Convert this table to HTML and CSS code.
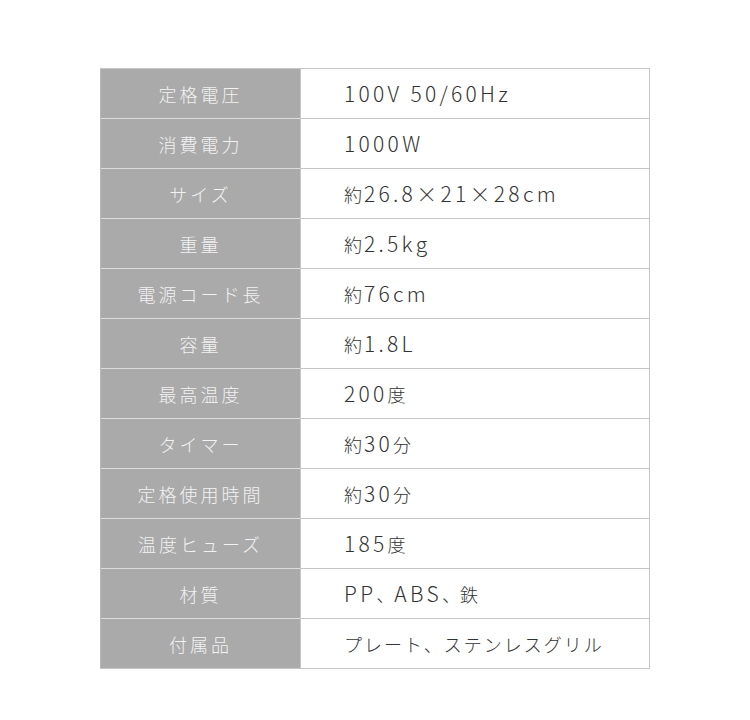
FILE: index.html
```html
<!DOCTYPE html>
<html lang="ja">
<head>
<meta charset="utf-8">
<link rel="stylesheet" href="styles.css">
</head>
<body>
<table class="spec">
  <tr><th>定格電圧</th><td><span class="n">100V 50/60Hz</span></td></tr>
  <tr><th>消費電力</th><td><span class="n">1000W</span></td></tr>
  <tr><th>サイズ</th><td>約<span class="n">26.8×21×28cm</span></td></tr>
  <tr><th>重量</th><td>約<span class="n">2.5kg</span></td></tr>
  <tr><th>電源コード長</th><td>約<span class="n">76cm</span></td></tr>
  <tr><th>容量</th><td>約<span class="n">1.8L</span></td></tr>
  <tr><th>最高温度</th><td><span class="n">200</span>度</td></tr>
  <tr><th>タイマー</th><td>約<span class="n">30</span>分</td></tr>
  <tr><th>定格使用時間</th><td>約<span class="n">30</span>分</td></tr>
  <tr><th>温度ヒューズ</th><td><span class="n">185</span>度</td></tr>
  <tr><th>材質</th><td><span class="n">PP</span><span class="p">、</span><span class="n">ABS</span><span class="p">、</span>鉄</td></tr>
  <tr><th>付属品</th><td>プレート、ステンレスグリル</td></tr>
</table>
</body>
</html>
```
FILE: styles.css
```css
html, body {
  margin: 0;
  padding: 0;
  background: #ffffff;
}
body {
  font-family: "Noto Sans CJK JP", "Noto Sans", sans-serif;
  font-weight: 300;
}
.spec {
  margin: 68px 0 0 100px;
  width: 550px;
  border-collapse: collapse;
  table-layout: fixed;
}
.spec th, .spec td {
  height: 50px;
  padding: 0;
  font-size: 18px;
  line-height: 1;
  box-sizing: border-box;
}
.spec th {
  width: 200px;
  background: #aaaaaa;
  color: #f2f2f2;
  font-weight: 300;
  text-align: center;
  letter-spacing: 3px;
  border-top: 1px solid #dcdcdc;
  border-left: 1px solid #b9b9b9;
}
.spec td {
  color: #333333;
  text-align: left;
  padding-left: 43px;
  letter-spacing: 2px;
  border: 1px solid #c6c6c6;
}
.spec .n {
  font-size: 21px;
  letter-spacing: 3.3px;
}
.spec .p {
  letter-spacing: -6px;
  margin-right: 6px;
}
.spec tr:first-child th {
  border-top: 1px solid #c6c6c6;
}
.spec tr:last-child th {
  border-bottom: 1px solid #c6c6c6;
}
```
